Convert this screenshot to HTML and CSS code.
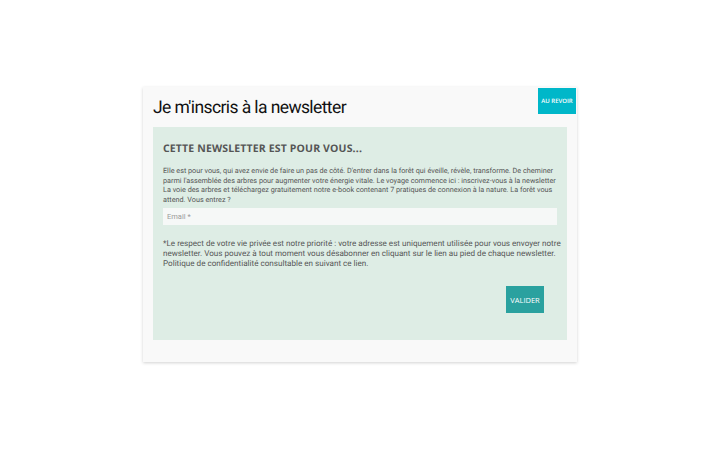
FILE: index.html
```html
<!DOCTYPE html>
<html lang="fr">
<head>
<meta charset="utf-8">
<title>Newsletter</title>
<link rel="stylesheet" href="styles.css">
</head>
<body>
<div class="page">
  <div class="modal">
    <div class="modal-head">
      <h1 class="title">Je m'inscris à la newsletter</h1>
      <a class="close" href="#">AU REVOIR</a>
    </div>
    <div class="panel">
      <h2 class="panel-title">CETTE NEWSLETTER EST POUR VOUS...</h2>
      <p class="intro">Elle est pour vous, qui avez envie de faire un pas de côté. D'entrer dans la forêt qui éveille, révèle, transforme. De cheminer parmi l'assemblée des arbres pour augmenter votre énergie vitale. Le voyage commence ici : inscrivez-vous à la newsletter La voie des arbres et téléchargez gratuitement notre e-book contenant 7 pratiques de connexion à la nature. La forêt vous attend. Vous entrez ?</p>
      <input class="email" type="email" placeholder="Email *">
      <p class="privacy">*Le respect de votre vie privée est notre priorité : votre adresse est uniquement utilisée pour vous envoyer notre newsletter. Vous pouvez à tout moment vous désabonner en cliquant sur le lien au pied de chaque newsletter. Politique de confidentialité consultable en suivant ce lien.</p>
      <div class="actions">
        <button class="submit" type="button">VALIDER</button>
      </div>
    </div>
  </div>
</div>
</body>
</html>
```

FILE: styles.css
```css
html, body {
  margin: 0;
  padding: 0;
  background: #ffffff;
}
body {
  font-family: Roboto, "Liberation Sans", sans-serif;
  width: 720px;
  height: 450px;
  overflow: hidden;
  text-rendering: geometricPrecision;
}
.page {
  padding: 87px 0 0 143px;
}
.modal {
  position: relative;
  width: 434px;
  height: 275px;
  box-sizing: border-box;
  background: #f9f9f9;
  box-shadow: 0 1px 3px rgba(0,0,0,0.18);
  padding: 0 10px;
}
.modal-head {
  height: 40px;
  display: flex;
  align-items: center;
}
.title {
  margin: 0;
  padding-top: 1px;
  font-family: Roboto, "Liberation Sans", sans-serif;
  font-weight: 400;
  font-size: 17.5px;
  color: #111;
  letter-spacing: -0.6px;
}
.close {
  position: absolute;
  top: 1px;
  right: 1px;
  width: 38px;
  height: 26px;
  background: #00b7c9;
  color: #fff;
  font-family: "Open Sans", "Liberation Sans", sans-serif;
  font-size: 6px;
  font-weight: 600;
  text-decoration: none;
  display: flex;
  align-items: center;
  justify-content: center;
  white-space: nowrap;
}
.panel {
  background: #deede5;
  height: 213px;
  box-sizing: border-box;
  padding: 15px 10px 0 10px;
}
.panel-title {
  margin: 0;
  font-family: "Open Sans", "DejaVu Sans", sans-serif;
  font-weight: 700;
  font-size: 10.5px;
  letter-spacing: 0.15px;
  color: #555;
  line-height: 14px;
}
.intro {
  margin: 10px -3px 0 0;
  font-size: 7.25px;
  line-height: 9.6px;
  color: #555;
}
.email {
  display: block;
  box-sizing: border-box;
  width: 100%;
  height: 17px;
  margin-top: 4px;
  border: none;
  background: #f6f8f7;
  padding: 0 4px;
  font-family: Roboto, "Liberation Sans", sans-serif;
  font-size: 7.5px;
  color: #555;
  outline: none;
}
.email::placeholder {
  color: #9a9a9a;
}
.privacy {
  margin: 13px -6px 0 0;
  font-size: 8.1px;
  line-height: 10px;
  color: #555;
}
.actions {
  display: flex;
  justify-content: flex-end;
  padding-right: 13px;
  margin-top: 18px;
}
.submit {
  width: 38px;
  height: 27px;
  border: none;
  padding: 0;
  background: #2aa19f;
  color: #fff;
  font-family: "Open Sans", "Liberation Sans", sans-serif;
  font-size: 7.5px;
  font-weight: 400;
  cursor: pointer;
}
```
